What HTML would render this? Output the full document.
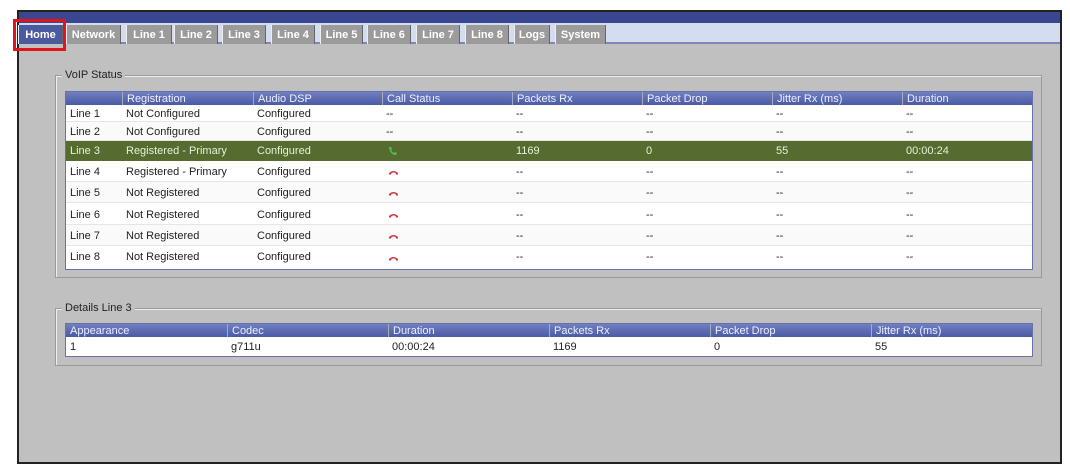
<!DOCTYPE html>
<html><head><meta charset="utf-8"><style>
*{margin:0;padding:0;box-sizing:border-box}
body{width:1070px;height:466px;background:#fff;font-family:"Liberation Sans",sans-serif;font-size:11px;color:#222;position:relative;overflow:hidden}
.a{position:absolute}
#frame{left:17px;top:10px;width:1045px;height:454px;border:2px solid #222;background:#c0c0c0}
#dark{left:19px;top:12px;width:1041px;height:11px;background:#3a4690}
#strip{left:19px;top:23px;width:1041px;height:21px;background:#d4dcf0;border-bottom:2px solid #7d88b8}
.tab{position:absolute;top:25px;height:19px;background:#9b9b9b;color:#fff;font-weight:bold;font-size:11px;line-height:20px;text-align:center;border-left:1px solid #eee;border-right:1px solid #666}
.fs{position:absolute;border:1px solid #9a9a9a;box-shadow:inset 1px 1px 0 #eee}
.lg{position:absolute;background:#c0c0c0;padding:0 3px;font-size:11px;color:#222}
.hdr{position:absolute;height:13px;background:linear-gradient(#6f7fc0,#4a5aa4);color:#eef;font-size:11px;line-height:14px}
.hdr span,.row span{position:absolute;top:0;padding-left:4px}
.row span{top:1px}
.hdr span{border-left:1px solid #aab}
.row{position:absolute;left:66px;width:966px;background:#fff;border-bottom:1px solid #e6e6e6}
.tbl{position:absolute;background:#fff;border:1px solid #6870a8}
.h{position:absolute;left:322px;top:50%;margin-top:-1px}
</style></head><body>
<div class="a" id="frame"></div>
<div class="a" id="dark"></div>
<div class="a" id="strip"></div>
<div class="tab" style="left:18px;width:45px;background:#4a5a9e">Home</div>
<div class="tab" style="left:66px;width:55px">Network</div>
<div class="tab" style="left:126px;width:46px">Line 1</div>
<div class="tab" style="left:174px;width:44px">Line 2</div>
<div class="tab" style="left:222px;width:44px">Line 3</div>
<div class="tab" style="left:271px;width:44px">Line 4</div>
<div class="tab" style="left:320px;width:43px">Line 5</div>
<div class="tab" style="left:367px;width:44px">Line 6</div>
<div class="tab" style="left:416px;width:44px">Line 7</div>
<div class="tab" style="left:465px;width:44px">Line 8</div>
<div class="tab" style="left:514px;width:36px">Logs</div>
<div class="tab" style="left:555px;width:51px">System</div>
<div class="a" style="left:13px;top:19px;width:53px;height:32px;border:3px solid #e0141e"></div>

<div class="fs" style="left:55px;top:75px;width:987px;height:203px"></div>
<div class="lg" style="left:62px;top:69px">VoIP Status</div>
<div class="tbl" style="left:65px;top:91px;width:968px;height:179px"></div>
<div class="hdr" style="left:66px;top:92px;width:966px">
<span style="left:0;border:0">&nbsp;</span><span style="left:56px">Registration</span><span style="left:187px">Audio DSP</span><span style="left:316px">Call Status</span><span style="left:446px">Packets Rx</span><span style="left:576px">Packet Drop</span><span style="left:706px">Jitter Rx (ms)</span><span style="left:836px">Duration</span></div>

<div class="row" style="top:105px;height:17px;line-height:17px"><span style="left:0">Line 1</span><span style="left:56px">Not Configured</span><span style="left:187px">Configured</span><span style="left:316px">--</span><span style="left:446px">--</span><span style="left:576px">--</span><span style="left:706px">--</span><span style="left:836px">--</span></div>
<div class="row" style="top:122px;height:19px;line-height:19px;background:#fafafa"><span style="left:0">Line 2</span><span style="left:56px">Not Configured</span><span style="left:187px">Configured</span><span style="left:316px">--</span><span style="left:446px">--</span><span style="left:576px">--</span><span style="left:706px">--</span><span style="left:836px">--</span></div>
<div class="row" style="top:141px;height:20px;line-height:19px;background:#556b2f;color:#e8f0d8;border:0"><span style="left:0">Line 3</span><span style="left:56px">Registered - Primary</span><span style="left:187px">Configured</span><svg style="position:absolute;left:322px;top:5px" width="9" height="10" viewBox="0 0 9 10"><path d="M1 1 L3 1 L4 3 L3 4 Q4 6 6 7 L7 6 L9 7 L8 9 Q2 9 1 1Z" fill="#4ec24e"/></svg><span style="left:446px">1169</span><span style="left:576px">0</span><span style="left:706px">55</span><span style="left:836px">00:00:24</span></div>

<div class="row" style="top:161px;height:21px;line-height:21px"><span style="left:0">Line 4</span><span style="left:56px">Registered - Primary</span><span style="left:187px">Configured</span><svg class="h" width="11" height="5" viewBox="0 0 11 5"><path d="M1 4.5 L1 3 Q5.5 -1 10 3 L10 4.5 L8 4.5 L7.5 3 Q5.5 2 3.5 3 L3 4.5Z" fill="#d03838"/></svg><span style="left:446px">--</span><span style="left:576px">--</span><span style="left:706px">--</span><span style="left:836px">--</span></div>
<div class="row" style="top:182px;height:21px;line-height:21px;background:#fafafa"><span style="left:0">Line 5</span><span style="left:56px">Not Registered</span><span style="left:187px">Configured</span><svg class="h" width="11" height="5" viewBox="0 0 11 5"><path d="M1 4.5 L1 3 Q5.5 -1 10 3 L10 4.5 L8 4.5 L7.5 3 Q5.5 2 3.5 3 L3 4.5Z" fill="#d03838"/></svg><span style="left:446px">--</span><span style="left:576px">--</span><span style="left:706px">--</span><span style="left:836px">--</span></div>
<div class="row" style="top:203px;height:22px;line-height:22px"><span style="left:0">Line 6</span><span style="left:56px">Not Registered</span><span style="left:187px">Configured</span><svg class="h" width="11" height="5" viewBox="0 0 11 5"><path d="M1 4.5 L1 3 Q5.5 -1 10 3 L10 4.5 L8 4.5 L7.5 3 Q5.5 2 3.5 3 L3 4.5Z" fill="#d03838"/></svg><span style="left:446px">--</span><span style="left:576px">--</span><span style="left:706px">--</span><span style="left:836px">--</span></div>
<div class="row" style="top:225px;height:21px;line-height:21px;background:#fafafa"><span style="left:0">Line 7</span><span style="left:56px">Not Registered</span><span style="left:187px">Configured</span><svg class="h" width="11" height="5" viewBox="0 0 11 5"><path d="M1 4.5 L1 3 Q5.5 -1 10 3 L10 4.5 L8 4.5 L7.5 3 Q5.5 2 3.5 3 L3 4.5Z" fill="#d03838"/></svg><span style="left:446px">--</span><span style="left:576px">--</span><span style="left:706px">--</span><span style="left:836px">--</span></div>
<div class="row" style="top:246px;height:22px;line-height:21px;border:0"><span style="left:0">Line 8</span><span style="left:56px">Not Registered</span><span style="left:187px">Configured</span><svg class="h" width="11" height="5" viewBox="0 0 11 5"><path d="M1 4.5 L1 3 Q5.5 -1 10 3 L10 4.5 L8 4.5 L7.5 3 Q5.5 2 3.5 3 L3 4.5Z" fill="#d03838"/></svg><span style="left:446px">--</span><span style="left:576px">--</span><span style="left:706px">--</span><span style="left:836px">--</span></div>

<div class="fs" style="left:55px;top:308px;width:987px;height:58px"></div>
<div class="lg" style="left:62px;top:302px">Details Line 3</div>
<div class="tbl" style="left:65px;top:323px;width:968px;height:34px"></div>
<div class="hdr" style="left:66px;top:324px;width:966px">
<span style="left:0;border:0">Appearance</span><span style="left:161px">Codec</span><span style="left:322px">Duration</span><span style="left:483px">Packets Rx</span><span style="left:644px">Packet Drop</span><span style="left:805px">Jitter Rx (ms)</span></div>
<div class="row" style="top:337px;height:19px;line-height:19px;border:0"><span style="left:0">1</span><span style="left:161px">g711u</span><span style="left:322px">00:00:24</span><span style="left:483px">1169</span><span style="left:644px">0</span><span style="left:805px">55</span></div>
</body></html>
